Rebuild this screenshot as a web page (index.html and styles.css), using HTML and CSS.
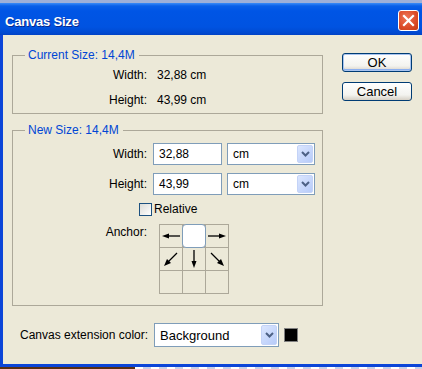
FILE: index.html
```
<!DOCTYPE html>
<html lang="en">
<head>
    <meta charset="UTF-8">
    <title>Canvas Size</title>
    <link rel="stylesheet" href="styles.css">
</head>
<body>
    <div class="window">
        <div class="titlebar">
            <span class="title">Canvas Size</span>
            <span class="close">
                <svg width="21" height="21" viewBox="0 0 21 21">
                    <path d="M6 6 L15 15 M15 6 L6 15" stroke="#fff" stroke-width="2.2" stroke-linecap="square"/>
                </svg>
            </span>
        </div>
        <div class="frame">
            <div class="main">
                <div class="groups">
                    <fieldset class="group current">
                        <legend>Current Size: 14,4M</legend>
                        <div class="row">
                            <span class="label">Width:</span>
                            <span class="value">32,88 cm</span>
                        </div>
                        <div class="row">
                            <span class="label">Height:</span>
                            <span class="value">43,99 cm</span>
                        </div>
                    </fieldset>
                    <fieldset class="group new">
                        <legend>New Size: 14,4M</legend>
                        <div class="row field">
                            <span class="label">Width:</span>
                            <div class="input">32,88</div>
                            <div class="select unit"><span>cm</span><i class="drop"><svg width="9" height="6" viewBox="0 0 9 6"><path d="M1 1 L4.5 4.5 L8 1" fill="none" stroke="#4d6185" stroke-width="2"/></svg></i></div>
                        </div>
                        <div class="row field">
                            <span class="label">Height:</span>
                            <div class="input">43,99</div>
                            <div class="select unit"><span>cm</span><i class="drop"><svg width="9" height="6" viewBox="0 0 9 6"><path d="M1 1 L4.5 4.5 L8 1" fill="none" stroke="#4d6185" stroke-width="2"/></svg></i></div>
                        </div>
                        <div class="relative">
                            <span class="check"></span>
                            <span>Relative</span>
                        </div>
                        <div class="anchor">
                            <span class="label">Anchor:</span>
                            <div class="grid">
                                <div class="cell">
                                    <svg width="22" height="22" viewBox="0 0 22 22"><path d="M8 11 H20" stroke="#000" stroke-width="1.3"/><path d="M2 11 L9 8.5 L9 13.5 Z" fill="#000"/></svg>
                                </div>
                                <div class="cell center"></div>
                                <div class="cell">
                                    <svg width="22" height="22" viewBox="0 0 22 22"><path d="M2 11 H14" stroke="#000" stroke-width="1.3"/><path d="M20 11 L13 8.5 L13 13.5 Z" fill="#000"/></svg>
                                </div>
                                <div class="cell">
                                    <svg width="22" height="22" viewBox="0 0 22 22"><path d="M17 5 L8 14" stroke="#000" stroke-width="1.3"/><path d="M4 18 L7 11 L11 15 Z" fill="#000"/></svg>
                                </div>
                                <div class="cell">
                                    <svg width="22" height="22" viewBox="0 0 22 22"><path d="M11 2 V14" stroke="#000" stroke-width="1.3"/><path d="M11 20 L8.5 13 L13.5 13 Z" fill="#000"/></svg>
                                </div>
                                <div class="cell">
                                    <svg width="22" height="22" viewBox="0 0 22 22"><path d="M5 5 L14 14" stroke="#000" stroke-width="1.3"/><path d="M18 18 L11 15 L15 11 Z" fill="#000"/></svg>
                                </div>
                                <div class="cell"></div>
                                <div class="cell"></div>
                                <div class="cell"></div>
                            </div>
                        </div>
                    </fieldset>
                </div>
                <div class="buttons">
                    <div class="btn default">OK</div>
                    <div class="btn">Cancel</div>
                </div>
            </div>
            <div class="extension">
                <span class="ext-label">Canvas extension color:</span>
                <div class="select ext"><span>Background</span><i class="drop"><svg width="9" height="6" viewBox="0 0 9 6"><path d="M1 1 L4.5 4.5 L8 1" fill="none" stroke="#4d6185" stroke-width="2"/></svg></i></div>
                <span class="swatch"></span>
            </div>
        </div>
        <div class="bottom-edge"></div>
        <div class="desktop">
            <span class="photo"></span>
            <span class="checker"></span>
        </div>
    </div>
</body>
</html>
```

FILE: styles.css
```
body{
    margin: 0;
    font-family: "Liberation Sans", Arial, sans-serif;
    font-size: 12px;
    color: #000;
    background-color: #ece9d8;
}
.window{
    width: 422px;
    height: 369px;
    overflow: hidden;
    display: flex;
    flex-direction: column;
}

.titlebar{
    height: 35px;
    box-sizing: border-box;
    border-top: 3px solid #9fb0d8;
    background: linear-gradient(#3b8cf8 0, #0a5fe8 3px, #0055e5 8px, #0053e1 24px, #0049d0 30px, #0142c5 32px);
    display: flex;
    align-items: center;
    justify-content: space-between;
    padding: 4px 3px 0 5px;
}
.title{
    color: #fff;
    font-size: 13px;
    font-weight: bold;
    letter-spacing: -0.2px;
    text-shadow: 1px 1px 0 #0a2a8c;
}
.close{
    width: 21px;
    height: 21px;
    box-sizing: border-box;
    border: 1px solid #fff;
    border-radius: 3px;
    background: radial-gradient(circle at 40% 35%, #ee7556 0, #db4a27 60%, #c33b15 100%);
    display: flex;
    margin-top: -2px;
}
.close svg{
    margin: -1px;
}

.frame{
    flex: 1;
    border-left: 3px solid #0b45d8;
    display: flex;
    flex-direction: column;
}
.main{
    display: flex;
}
.groups{
    width: 311px;
    margin-left: 9px;
}

.group{
    margin: 0;
    padding: 0 0 1px 0;
    border: 1px solid #aca899;
    min-width: 0;
}
.group legend{
    color: #0046d5;
    line-height: 13px;
    padding: 0 4px 0 3px;
    margin-left: 12px;
}
.current{
    margin-top: 14px;
}
.new{
    margin-top: 10px;
    height: 182px;
    box-sizing: border-box;
}

.row{
    display: flex;
    align-items: center;
    height: 25px;
}
.label{
    width: 134px;
    text-align: right;
}
.value{
    margin-left: 10px;
}

.field{
    height: 22px;
    margin-top: 6px;
}
.field + .field{
    margin-top: 8px;
}
.input{
    margin-left: 6px;
    width: 69px;
    height: 22px;
    box-sizing: border-box;
    border: 1px solid #7f9db9;
    background-color: #fff;
    padding: 0 5px;
    line-height: 20px;
}
.select{
    height: 22px;
    box-sizing: border-box;
    border: 1px solid #7f9db9;
    background-color: #fff;
    display: flex;
    align-items: center;
    justify-content: space-between;
    padding: 1px 1px 1px 5px;
}
.unit{
    margin-left: 5px;
    width: 88px;
}
.drop{
    width: 16px;
    height: 18px;
    border-radius: 2px;
    background: linear-gradient(135deg, #dbe6fe, #b7cbf9);
    border: 1px solid #c4d3f7;
    box-sizing: border-box;
    display: flex;
    align-items: center;
    justify-content: center;
}

.relative{
    display: flex;
    align-items: center;
    gap: 2px;
    margin: 7px 0 0 126px;
    height: 14px;
}
.check{
    width: 13px;
    height: 13px;
    box-sizing: border-box;
    border: 1px solid #1c5180;
    background: linear-gradient(135deg, #dcdcd7, #fff);
}

.anchor{
    display: flex;
    margin-top: 8px;
}
.anchor .label{
    padding-top: 1px;
}
.grid{
    margin-left: 12px;
    display: grid;
    grid-template-columns: repeat(3, 22px);
    grid-template-rows: repeat(3, 22px);
    gap: 1px;
    padding: 1px;
    background-color: #aca899;
}
.cell{
    background-color: #ece9d8;
}
.cell.center{
    background-color: #fff;
    border: 1px solid #7f9db9;
    border-radius: 4px;
    margin: -1px;
}

.buttons{
    margin-left: 19px;
    margin-top: 18px;
    display: flex;
    flex-direction: column;
    gap: 10px;
}
.btn{
    width: 70px;
    height: 19px;
    box-sizing: border-box;
    border: 1px solid #003c74;
    border-radius: 3px;
    background: linear-gradient(#fff, #f3f3ef 70%, #d6d0c5);
    font-size: 13px;
    text-align: center;
    line-height: 17px;
}
.btn.default{
    box-shadow: inset 0 0 0 1px #a8c4f0, inset 0 -1px 0 1px #8cb0f0;
}

.extension{
    display: flex;
    align-items: center;
    margin-top: 17px;
    margin-left: 17px;
}
.ext{
    margin-left: 6px;
    width: 125px;
    height: 24px;
    font-size: 13px;
}
.ext .drop{
    height: 20px;
}
.swatch{
    margin-left: 5px;
    width: 14px;
    height: 14px;
    box-sizing: border-box;
    border: 1px solid #808080;
    background-color: #000;
}

.bottom-edge{
    height: 3px;
    background-color: #0b45d8;
}
.desktop{
    height: 2px;
    display: flex;
}
.photo{
    width: 135px;
    background-color: #5a2f14;
}
.checker{
    flex: 1;
    background: repeating-linear-gradient(90deg, #ffffff 0 8px, #c8cfe6 8px 16px);
}
```
